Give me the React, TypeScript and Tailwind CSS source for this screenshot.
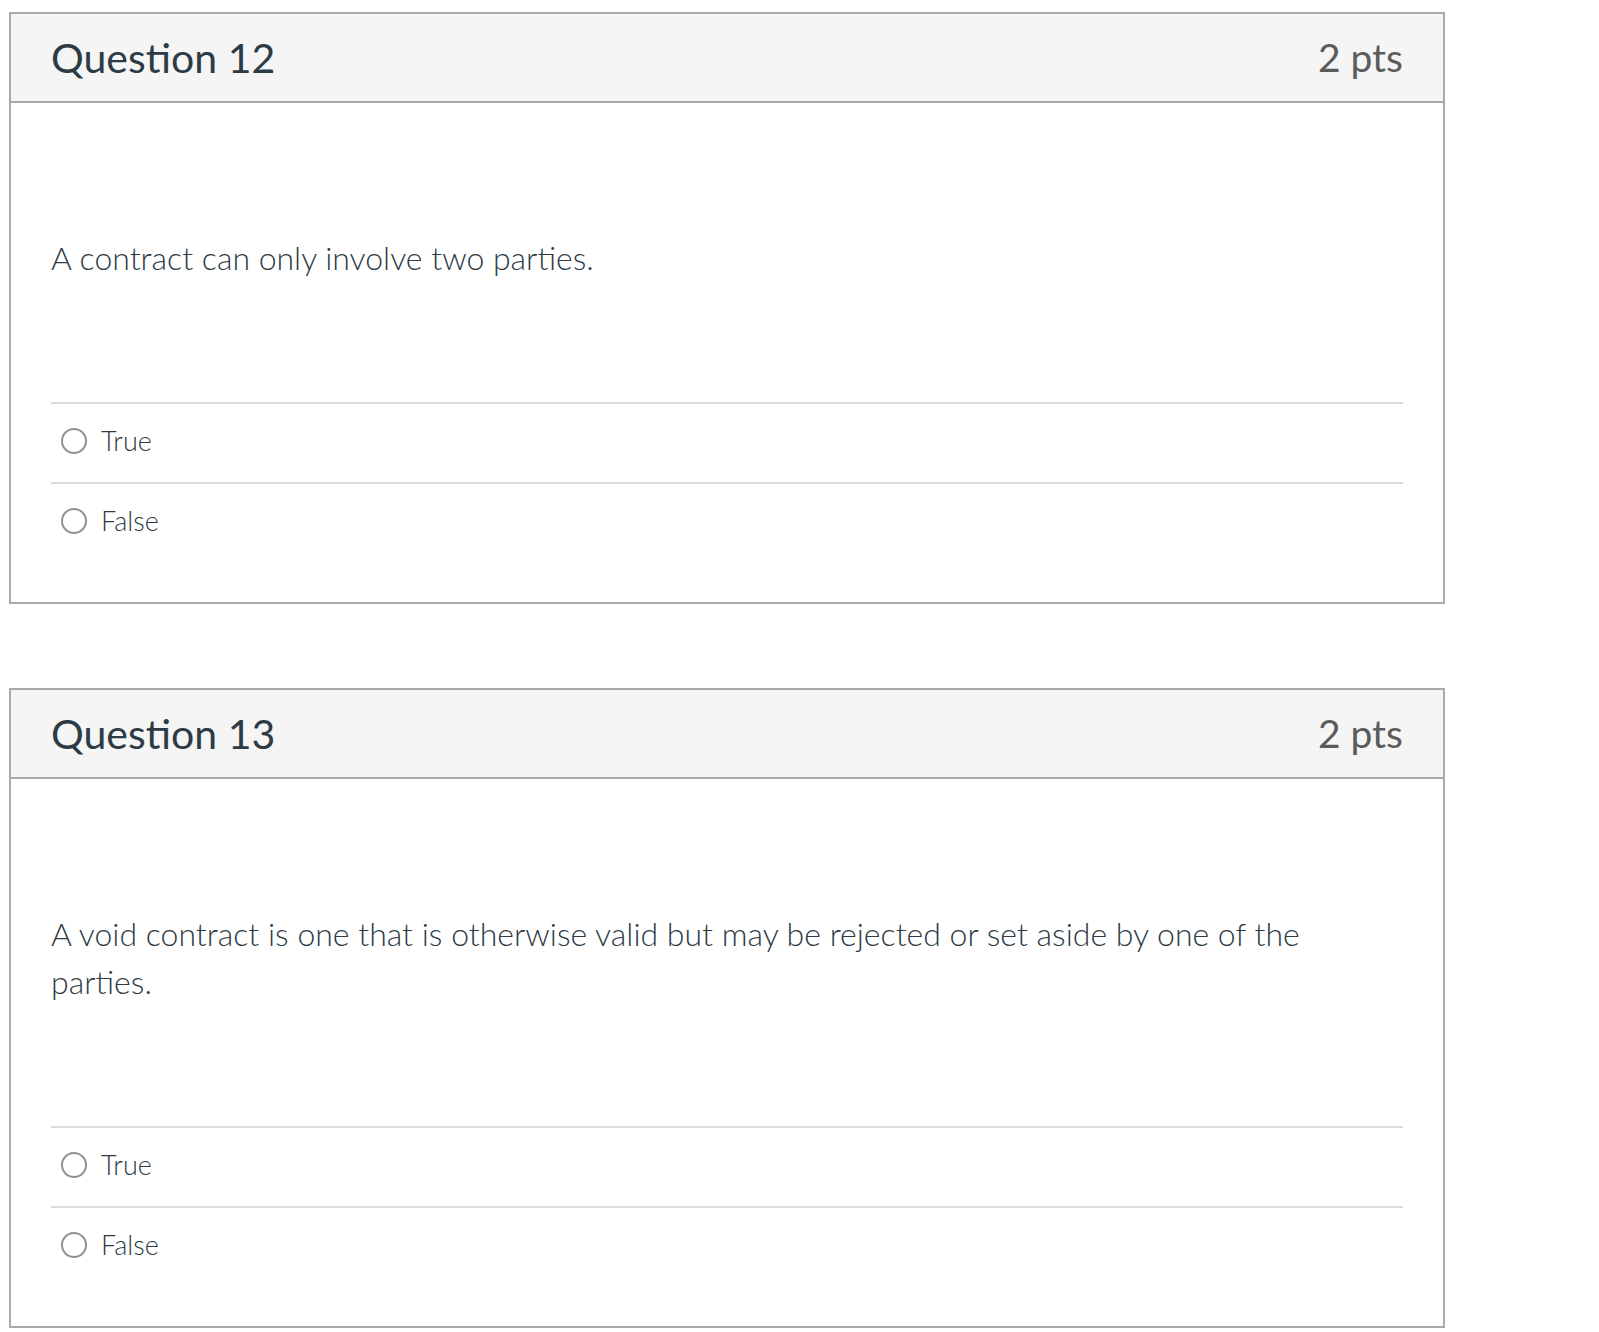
import React from "react";

type Q = { num: number; text: string };

const questions: Q[] = [
  { num: 12, text: "A contract can only involve two parties." },
  {
    num: 13,
    text: "A void contract is one that is otherwise valid but may be rejected or set aside by one of the parties.",
  },
];

function Option({ label }: { label: string }) {
  return (
    <div className="h-[80px] border-t-2 border-[#dcdcdc] pb-[4px] flex items-center">
      <span className="ml-[10px] w-[26px] h-[26px] rounded-full border-[2.5px] border-[#8e9295] bg-white shrink-0" />
      <span className="ml-[14px] text-[27px] leading-[32px] font-light text-[#2d3b45]">{label}</span>
    </div>
  );
}

function Card({ q, className }: { q: Q; className?: string }) {
  return (
    <div className={"w-[1436px] border-2 border-[#aaaaaa] bg-white " + (className ?? "")}>
      <div className="h-[89px] bg-[#f5f5f5] border-b-2 border-[#aaaaaa] flex items-center justify-between px-10">
        <span className="text-[41px] leading-[49px] text-[#2d3b45]">Question {q.num}</span>
        <span className="text-[39px] leading-[47px] text-[#5b5b5b]">2 pts</span>
      </div>
      <div className="px-10 pt-[131px] pb-10">
        <p className="text-[32px] leading-[48px] font-light text-[#2d3b45]">{q.text}</p>
        <div className="mt-[120px]">
          <Option label="True" />
          <Option label="False" />
        </div>
      </div>
    </div>
  );
}

export default function App() {
  return (
    <div className="min-h-screen bg-white pt-[12px] pl-[9px]" style={{ fontFamily: "Lato, 'Open Sans', sans-serif" }}>
      <Card q={questions[0]} />
      <Card q={questions[1]} className="mt-[84px]" />
    </div>
  );
}
